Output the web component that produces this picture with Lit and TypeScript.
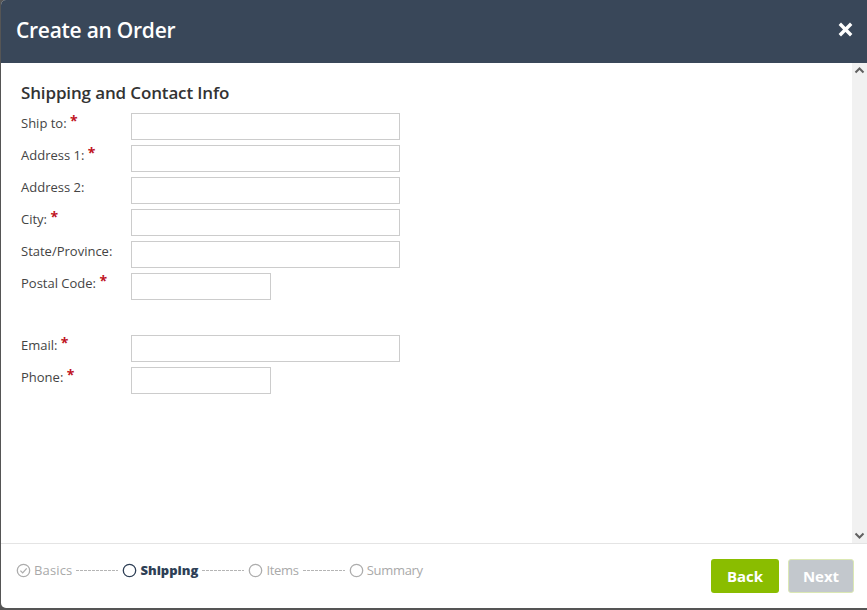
import { LitElement, html, svg, css } from "lit";
import { customElement } from "lit/decorators.js";

type Field = { label: string; required: boolean; short?: boolean; gapBefore?: boolean };

const FIELDS: Field[] = [
  { label: "Ship to:", required: true },
  { label: "Address 1:", required: true },
  { label: "Address 2:", required: false },
  { label: "City:", required: true },
  { label: "State/Province:", required: false },
  { label: "Postal Code:", required: true, short: true },
  { label: "Email:", required: true, gapBefore: true },
  { label: "Phone:", required: true, short: true },
];

const STEPS = [
  { label: "Basics", state: "done" },
  { label: "Shipping", state: "current" },
  { label: "Items", state: "todo" },
  { label: "Summary", state: "todo" },
];

@customElement("app-root")
export class AppRoot extends LitElement {
  static styles = css`
    :host {
      display: block;
      width: 867px;
      height: 610px;
      background: #555;
      font-family: "Open Sans", Lato, sans-serif;
      overflow: hidden;
    }
    .modal {
      display: flex;
      flex-direction: column;
      height: 608px;
      margin-left: 1px;
      background: #fff;
      border-radius: 5px 0 0 5px;
      overflow: hidden;
    }
    .header {
      flex: none;
      height: 63px;
      display: flex;
      align-items: center;
      justify-content: space-between;
      padding: 0 14px 4px 15px;
      box-sizing: border-box;
      background: #394759;
      color: #fff;
    }
    .title {
      font-size: 21px;
      font-weight: 600;
      letter-spacing: -0.27px;
    }
    .close {
      display: block;
      width: 15px;
      height: 15px;
    }
    .body {
      flex: 1;
      min-height: 0;
      display: flex;
    }
    .content {
      flex: 1;
      padding: 19px 0 0 20px;
    }
    h2 {
      margin: 0 0 10px;
      font-size: 17px;
      line-height: 21px;
      font-weight: 600;
      letter-spacing: -0.14px;
      color: #333;
    }
    .row {
      display: flex;
      height: 27px;
      margin-bottom: 5px;
    }
    .row.gap {
      margin-top: 35px;
    }
    .label {
      width: 110px;
      flex: none;
      font-size: 13px;
      line-height: 20px;
      color: #444;
    }
    .star {
      display: inline-block;
      color: #c0141f;
      font-size: 14px;
      font-weight: 700;
      line-height: 10px;
      vertical-align: 2px;
    }
    input {
      display: block;
      box-sizing: border-box;
      width: 269px;
      height: 27px;
      margin: 0;
      padding: 0 6px;
      border: 1px solid #ccc;
      border-radius: 0;
      background: #fff;
      outline: none;
    }
    input.short {
      width: 140px;
    }
    .scrollbar {
      flex: none;
      width: 15px;
      display: flex;
      flex-direction: column;
      justify-content: space-between;
      background: #f1f1f1;
    }
    .scrollbar svg {
      display: block;
      width: 15px;
      height: 15px;
    }
    .footer {
      flex: none;
      height: 65px;
      display: flex;
      align-items: center;
      justify-content: space-between;
      box-sizing: border-box;
      padding: 0 13px 0 15px;
      border-top: 1px solid #e4e4e4;
    }
    .steps {
      display: flex;
      align-items: center;
      gap: 4px;
      font-size: 13px;
      color: #a9a9a9;
      margin-top: -12px;
    }
    .step {
      display: flex;
      align-items: center;
      gap: 3px;
    }
    .step svg {
      display: block;
      width: 15px;
      height: 15px;
    }
    .step.done {
      letter-spacing: 0.15px;
    }
    .step.todo {
      letter-spacing: -0.3px;
    }
    .step.current {
      color: #2e3f56;
      font-weight: 800;
    }
    .dash {
      width: 42px;
      height: 1px;
      margin-top: 1px;
      background: repeating-linear-gradient(to right, #b5b5b5 0 3px, transparent 3px 4px);
    }
    .actions {
      display: flex;
      gap: 9px;
    }
    button {
      box-sizing: border-box;
      height: 34px;
      border-radius: 3px;
      font-family: inherit;
      font-size: 15px;
      font-weight: 700;
      color: #fff;
      padding: 0;
    }
    .back {
      width: 68px;
      background: #8abd00;
      border: none;
    }
    .next {
      width: 66px;
      background: #c3c8cd;
      border: 1px solid #dbe8b4;
    }
  `;

  private stepIcon(state: string) {
    const stroke = state === "current" ? "#2e3f56" : "#adadad";
    return html`<svg viewBox="0 0 15 15" fill="none" stroke=${stroke} stroke-width="1.3">
      <circle cx="7.5" cy="7.5" r="6.2" />
      ${state === "done" ? svg`<path d="M4.4 7.6l2.3 2.3 4-4.5" />` : ""}
    </svg>`;
  }

  render() {
    return html`
      <div class="modal">
        <header class="header">
          <span class="title">Create an Order</span>
          <svg class="close" viewBox="0 0 15 15" stroke="#fff" stroke-width="3.4">
            <path d="M1.8 1.8l11.4 11.4M13.2 1.8l-11.4 11.4" />
          </svg>
        </header>
        <div class="body">
          <div class="content">
            <h2>Shipping and Contact Info</h2>
            ${FIELDS.map(
              (f) => html`
                <div class="row ${f.gapBefore ? "gap" : ""}">
                  <div class="label">
                    ${f.label}${f.required ? html` <span class="star">*</span>` : ""}
                  </div>
                  <input class=${f.short ? "short" : ""} type="text" />
                </div>
              `
            )}
          </div>
          <div class="scrollbar">
            <svg viewBox="0 0 15 15" fill="none" stroke="#606060" stroke-width="2">
              <path d="M3.5 9.5l4-4 4 4" />
            </svg>
            <svg viewBox="0 0 15 15" fill="none" stroke="#606060" stroke-width="2">
              <path d="M3.5 5.5l4 4 4-4" />
            </svg>
          </div>
        </div>
        <footer class="footer">
          <div class="steps">
            ${STEPS.map(
              (s, i) => html`
                ${i > 0 ? html`<span class="dash"></span>` : ""}
                <span class="step ${s.state}">${this.stepIcon(s.state)}${s.label}</span>
              `
            )}
          </div>
          <div class="actions">
            <button class="back">Back</button>
            <button class="next">Next</button>
          </div>
        </footer>
      </div>
    `;
  }
}
